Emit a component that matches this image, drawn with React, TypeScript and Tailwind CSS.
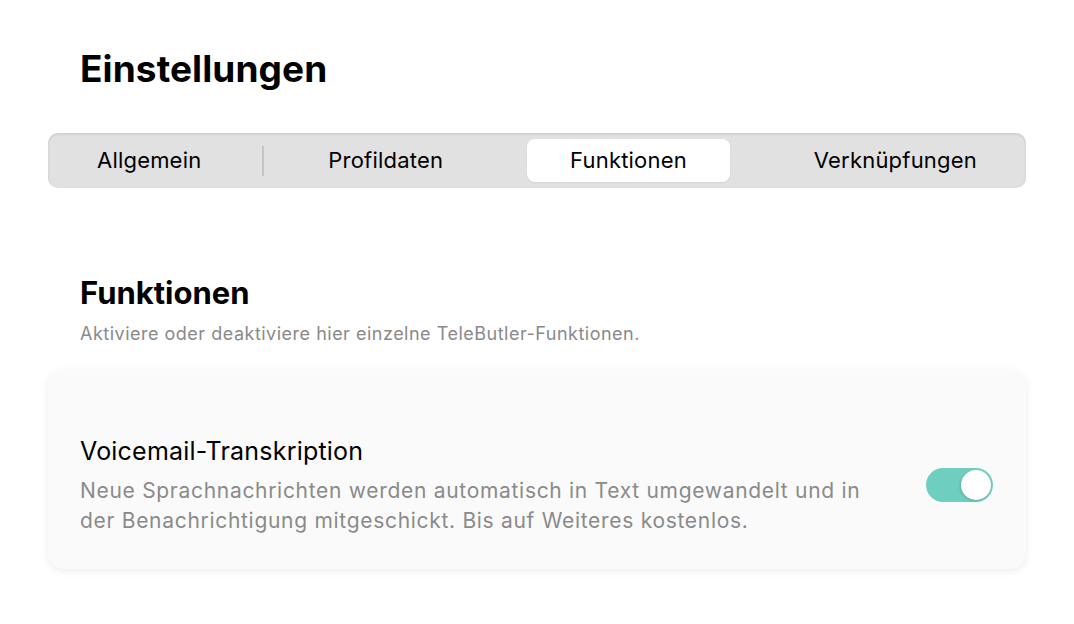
const tabs = ["Allgemein", "Profildaten", "Funktionen", "Verknüpfungen"];

export default function App() {
  const active = 2;

  return (
    <div className="min-h-screen bg-white font-['Inter','Noto_Sans',sans-serif] text-black">
      <div className="px-[48px] pt-[45px]">
        <h1 className="px-[32px] text-[37px] font-bold leading-[48px] tracking-[0.1px]">
          Einstellungen
        </h1>

        <div className="mt-[40px] flex items-center justify-between rounded-[10px] bg-[#e1e1e1] p-[6px] shadow-[inset_0_1px_3px_rgba(0,0,0,0.12)]">
          {tabs.map((t, i) => (
            <div
              key={t}
              className={
                "relative flex h-[43px] items-center rounded-[8px] px-[43px] text-[22px] tracking-[0.2px] " +
                (i === active ? "bg-white shadow-[0_1px_2px_rgba(0,0,0,0.06)] " : "") +
                (i === 0
                  ? "after:absolute after:right-[-20px] after:top-[7px] after:h-[30px] after:w-[2px] after:bg-[#c4c4c4]"
                  : "")
              }
            >
              {t}
            </div>
          ))}
        </div>

        <div className="mt-[85px] px-[32px]">
          <h2 className="text-[31px] font-bold leading-[40px]">Funktionen</h2>
          <p className="mt-[8px] text-[18px] leading-[26px] tracking-[0.5px] text-[#8a8a8a]">
            Aktiviere oder deaktiviere hier einzelne TeleButler-Funktionen.
          </p>
        </div>

        <div className="mt-[23px] flex items-center justify-between rounded-[16px] bg-[#fafafa] px-[32px] pb-[33px] pt-[64px] shadow-[0_2px_8px_rgba(0,0,0,0.08)]">
          <div className="w-[820px]">
            <h3 className="text-[25px] leading-[34px] tracking-[0.2px]">Voicemail-Transkription</h3>
            <p className="mt-[8px] text-[21px] leading-[30px] tracking-[0.7px] text-[#8a8a8a]">
              Neue Sprachnachrichten werden automatisch in Text umgewandelt und in der
              Benachrichtigung mitgeschickt. Bis auf Weiteres kostenlos.
            </p>
          </div>
          <div className="mr-[1px] flex h-[34px] w-[67px] items-center justify-end rounded-full bg-[#6ecfc0] p-[2px]">
            <div className="h-[30px] w-[30px] rounded-full bg-white shadow-[-1px_1px_3px_rgba(0,0,0,0.15)]" />
          </div>
        </div>
      </div>
    </div>
  );
}
